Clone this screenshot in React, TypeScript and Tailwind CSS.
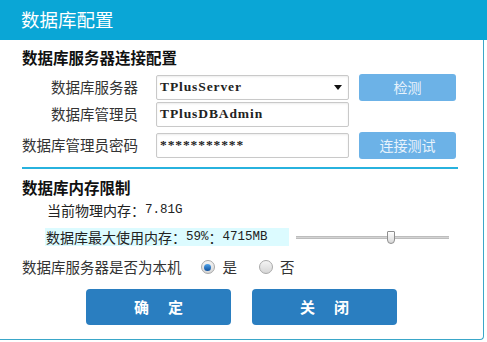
const cjk = "font-['Microsoft_YaHei','Noto_Sans_CJK_SC',sans-serif]";
const serif = "font-['Liberation_Serif','Noto_Sans_CJK_SC',serif]";
const mono = "font-['Liberation_Mono','Noto_Sans_CJK_SC',monospace]";

function Field({ value, select }: { value: string; select?: boolean }) {
  return (
    <div className="w-[193px] h-[25px] border border-[#c9c9c9] rounded-[2px] bg-white shadow-[inset_0_1px_2px_rgba(0,0,0,0.08)] flex items-center pl-[3px] pr-[6px]">
      <span className={`${serif} text-[13.5px] font-bold tracking-[0.9px] text-[#222] flex-1 leading-none`}>{value}</span>
      {select && (
        <span className="w-0 h-0 border-l-[4px] border-r-[4px] border-t-[5px] border-l-transparent border-r-transparent border-t-[#111]" />
      )}
    </div>
  );
}

function LightButton({ label }: { label: string }) {
  return (
    <div className="w-[97px] h-[27px] rounded-[3px] bg-[#6cb2e7] flex items-center justify-center text-[14px] text-[#e8f3fc]">
      {label}
    </div>
  );
}

function Radio({ checked }: { checked?: boolean }) {
  return (
    <span className="w-[14px] h-[14px] rounded-full border border-[#a9a9a9] bg-gradient-to-b from-[#f4f4f4] to-[#d6d6d6] flex items-center justify-center">
      {checked && <span className="w-[7px] h-[7px] rounded-full bg-gradient-to-b from-[#4fa3ea] to-[#0d4f9c]" />}
    </span>
  );
}

export default function App() {
  return (
    <div className={`w-[487px] h-[342px] bg-white ${cjk} text-[#333]`}>
      <div className="h-[40px] bg-[#0aa6d6] pl-[21px] flex items-center text-[18.5px] text-white">数据库配置</div>
      <div className="w-[484px] h-[300px] border-r border-b border-[#3aa7c9] rounded-br-[4px] flex flex-col">
        <div className="mt-[8px] ml-[22px] h-[20px] flex items-center text-[15.5px] font-bold text-[#111]">数据库服务器连接配置</div>

        <div className="mt-[5px] h-[28px] flex items-center">
          <div className="w-[138px] pl-[22px] text-right text-[14.5px]">数据库服务器</div>
          <div className="ml-[18px]"><Field value="TPlusServer" select /></div>
          <div className="ml-[10px]"><LightButton label="检测" /></div>
        </div>
        <div className="h-[26px] flex items-center">
          <div className="w-[138px] pl-[22px] text-right text-[14.5px]">数据库管理员</div>
          <div className="ml-[18px]"><Field value="TPlusDBAdmin" /></div>
        </div>
        <div className="mt-[4px] h-[28px] flex items-center">
          <div className="w-[138px] pl-[22px] text-right text-[14.5px]">数据库管理员密码</div>
          <div className="ml-[18px]"><Field value="***********" /></div>
          <div className="ml-[10px]"><LightButton label="连接测试" /></div>
        </div>

        <div className="mt-[8px] ml-[22px] w-[436px] h-[2px] bg-[#27b2de]" />

        <div className="mt-[9px] ml-[22px] h-[20px] flex items-center text-[15.5px] font-bold text-[#111]">数据库内存限制</div>
        <div className="mt-[2px] ml-[47px] h-[20px] flex items-center text-[14px] text-[#222]">
          当前物理内存：<span className={`${mono} text-[12.5px]`}>7.81G</span>
        </div>
        <div className="mt-[8px] h-[18px] flex items-center">
          <div className="ml-[45px] w-[244px] h-[18px] bg-[#dcfbff] flex items-center text-[14px] text-[#222]">
            <span className="pl-[1px]">数据库最大使用内存：</span>
            <span className={`${mono} text-[12.5px]`}>59%</span>
            <span>：</span>
            <span className={`${mono} text-[12.5px]`}>4715MB</span>
          </div>
          <div className="ml-[7px] w-[153px] h-[14px] flex items-center">
            <div className="w-[91px] h-[3px] bg-[#d4d4d4] border-y border-[#bdbdbd]" />
            <div className="w-[8px] h-[13px] border border-[#8f8f8f] rounded-t-[1px] rounded-b-[4px] bg-gradient-to-b from-white to-[#d8d8d8]" />
            <div className="flex-1 h-[3px] bg-[#d4d4d4] border-y border-[#bdbdbd]" />
          </div>
        </div>

        <div className="mt-[11px] ml-[22px] h-[20px] flex items-center text-[14.5px]">
          <span>数据库服务器是否为本机</span>
          <span className="ml-[19px]"><Radio checked /></span>
          <span className="ml-[8px]">是</span>
          <span className="ml-[22px]"><Radio /></span>
          <span className="ml-[7px]">否</span>
        </div>

        <div className="mt-[12px] ml-[86px] flex gap-[21px]">
          <div className="w-[145px] h-[36px] rounded-[4px] bg-[#2a7ec0] flex items-center justify-center gap-[19px] text-[15px] font-bold text-white">
            <span>确</span><span>定</span>
          </div>
          <div className="w-[145px] h-[36px] rounded-[4px] bg-[#2a7ec0] flex items-center justify-center gap-[19px] text-[15px] font-bold text-white">
            <span>关</span><span>闭</span>
          </div>
        </div>
      </div>
    </div>
  );
}
